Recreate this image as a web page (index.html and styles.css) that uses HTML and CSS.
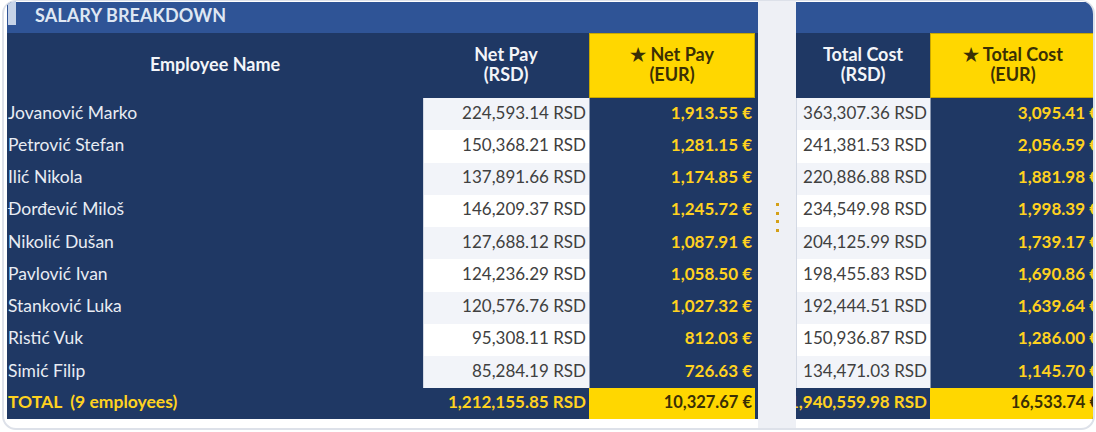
FILE: index.html
```html
<!DOCTYPE html>
<html lang="sr">
<head>
<meta charset="utf-8">
<title>Salary Breakdown</title>
<link rel="stylesheet" href="styles.css">
</head>
<body>
<div class="card">
  <div class="pane pane-left">
    <div class="titlebar">
      <span class="accent"></span>
      <span class="title">SALARY BREAKDOWN</span>
    </div>
    <div class="grid grid-left">
      <div class="hd">Employee Name</div>
      <div class="hd">Net Pay<br>(RSD)</div>
      <div class="hd hd-gold">★ Net Pay<br>(EUR)</div>

      <div class="name">Jovanović Marko</div><div class="rsd odd">224,593.14 RSD</div><div class="eur">1,913.55 €</div>
      <div class="name">Petrović Stefan</div><div class="rsd">150,368.21 RSD</div><div class="eur">1,281.15 €</div>
      <div class="name">Ilić Nikola</div><div class="rsd odd">137,891.66 RSD</div><div class="eur">1,174.85 €</div>
      <div class="name">Đorđević Miloš</div><div class="rsd">146,209.37 RSD</div><div class="eur">1,245.72 €</div>
      <div class="name">Nikolić Dušan</div><div class="rsd odd">127,688.12 RSD</div><div class="eur">1,087.91 €</div>
      <div class="name">Pavlović Ivan</div><div class="rsd">124,236.29 RSD</div><div class="eur">1,058.50 €</div>
      <div class="name">Stanković Luka</div><div class="rsd odd">120,576.76 RSD</div><div class="eur">1,027.32 €</div>
      <div class="name">Ristić Vuk</div><div class="rsd">95,308.11 RSD</div><div class="eur">812.03 €</div>
      <div class="name">Simić Filip</div><div class="rsd odd">85,284.19 RSD</div><div class="eur">726.63 €</div>

      <div class="tot-label">TOTAL  (9 employees)</div><div class="tot-rsd"><span>1,212,155.85 RSD</span></div><div class="tot-eur">10,327.67 €</div>
    </div>
  </div>

  <div class="gap">
    <span class="dot"></span><span class="dot"></span><span class="dot"></span><span class="dot"></span>
  </div>

  <div class="pane pane-right">
    <div class="titlebar"></div>
    <div class="grid grid-right">
      <div class="hd">Total Cost<br>(RSD)</div>
      <div class="hd hd-gold">★ Total Cost<br>(EUR)</div>

      <div class="rsd odd">363,307.36 RSD</div><div class="eur">3,095.41 €</div>
      <div class="rsd">241,381.53 RSD</div><div class="eur">2,056.59 €</div>
      <div class="rsd odd">220,886.88 RSD</div><div class="eur">1,881.98 €</div>
      <div class="rsd">234,549.98 RSD</div><div class="eur">1,998.39 €</div>
      <div class="rsd odd">204,125.99 RSD</div><div class="eur">1,739.17 €</div>
      <div class="rsd">198,455.83 RSD</div><div class="eur">1,690.86 €</div>
      <div class="rsd odd">192,444.51 RSD</div><div class="eur">1,639.64 €</div>
      <div class="rsd">150,936.87 RSD</div><div class="eur">1,286.00 €</div>
      <div class="rsd odd">134,471.03 RSD</div><div class="eur">1,145.70 €</div>

      <div class="tot-rsd"><span>1,940,559.98 RSD</span></div><div class="tot-eur">16,533.74 €</div>
    </div>
  </div>
</div>
</body>
</html>
```

FILE: styles.css
```css
* { box-sizing: border-box; }

html, body {
  margin: 0;
  padding: 0;
  background: #ffffff;
}

body {
  width: 1096px;
  height: 432px;
  overflow: hidden;
  font-family: Lato, "Noto Sans", sans-serif;
}

.card {
  margin-left: 2px;
  width: 1093px;
  height: 430px;
  border: 2px solid #dde1e9;
  border-top-width: 1px;
  border-radius: 14px;
  overflow: hidden;
  display: flex;
  padding-left: 3px;
  background: #ffffff;
}

.pane {
  display: flex;
  flex-direction: column;
  flex: none;
}

.pane-left { width: 751px; }
.pane-right { flex: 1; overflow: hidden; }

.titlebar {
  height: 31px;
  margin-top: 1px;
  background: #2f5496;
  display: flex;
  align-items: center;
  flex: none;
}

.accent {
  align-self: flex-start;
  width: 8px;
  height: 24px;
  margin-left: 1px;
  margin-top: -1px;
  background: #c6d3e8;
}

.title {
  margin-left: 19px;
  margin-top: -6px;
  color: #dfe7f3;
  font-weight: 700;
  font-size: 18px;
  letter-spacing: 0.1px;
}

.grid {
  display: grid;
  grid-template-rows: 65px repeat(9, 32.25px) 31px;
  background: #1f3864;
}

.grid-left {
  grid-template-columns: 416px 166px 166px;
  padding-right: 3px;
}

.grid-right {
  grid-template-columns: 134px 172px;
}

.hd {
  display: flex;
  align-items: center;
  justify-content: center;
  text-align: center;
  color: #f3f5f9;
  font-weight: 700;
  font-size: 18px;
  line-height: 20px;
  padding-bottom: 4px;
}

.grid-right .hd-gold { padding-right: 6px; }

.hd-gold {
  background: #ffd700;
  color: #3a2f05;
  border: 1px solid #c9a800;
}

.name {
  display: flex;
  align-items: center;
  padding-left: 1px;
  color: #e8ecf3;
  font-size: 17.5px;
  padding-bottom: 4px;
}

.rsd {
  display: flex;
  align-items: center;
  justify-content: flex-end;
  padding-right: 3px;
  padding-bottom: 4px;
  background: #ffffff;
  color: #404040;
  font-size: 17px;
  border-left: 1px solid #d3d9e4;
  white-space: nowrap;
}

.rsd.odd { background: #f2f4f9; }

.eur {
  display: flex;
  align-items: center;
  justify-content: flex-end;
  padding-right: 3px;
  padding-bottom: 4px;
  color: #ffd21f;
  font-weight: 700;
  font-size: 17px;
  white-space: nowrap;
  border-left: 1px solid #8a97b0;
}

.tot-label {
  display: flex;
  align-items: center;
  padding-left: 1px;
  padding-bottom: 4px;
  color: #ffd21f;
  font-weight: 700;
  font-size: 17.5px;
  white-space: pre;
}

.tot-rsd {
  display: flex;
  align-items: center;
  justify-content: flex-end;
  overflow: hidden;
  padding-right: 3px;
  padding-bottom: 4px;
  color: #ffd21f;
  font-weight: 700;
  font-size: 17px;
  white-space: nowrap;
}

.tot-rsd span { flex: none; }

.tot-eur {
  display: flex;
  align-items: center;
  justify-content: flex-end;
  padding-right: 3px;
  padding-bottom: 4px;
  background: #ffd700;
  color: #3a2f05;
  font-weight: 700;
  font-size: 16.5px;
  white-space: nowrap;
}

.gap {
  width: 38px;
  flex: none;
  background: #eef0f5;
  display: flex;
  flex-direction: column;
  align-items: center;
  padding-top: 202px;
  gap: 5.5px;
}

.dot {
  width: 3px;
  height: 3px;
  background: #d4a017;
}
```
